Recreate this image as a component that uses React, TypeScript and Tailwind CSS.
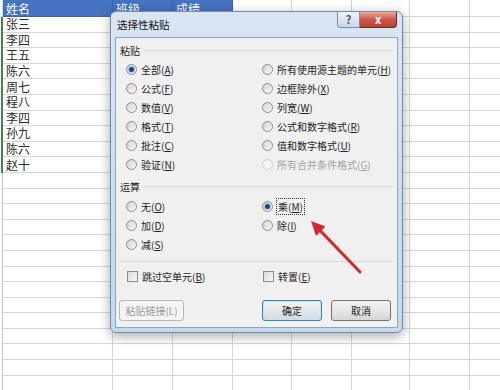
import React from "react";

const colW = [3, 110, 60, 60, 59, 60, 58, 60, 60];
const names = ["张三", "李四", "王五", "陈六", "周七", "程八", "李四", "孙九", "陈六", "赵十"];

function Radio({ checked, disabled }: { checked?: boolean; disabled?: boolean }) {
  return (
    <span
      className={
        disabled
          ? "w-[11px] h-[11px] rounded-full border border-[#cfcfcf] bg-[#f5f5f5] flex items-center justify-center shrink-0"
          : "w-[11px] h-[11px] rounded-full border border-[#8d8d8d] bg-gradient-to-br from-[#d2d2d2] to-[#fafafa] flex items-center justify-center shrink-0"
      }
    >
      {checked && <span className="w-[5px] h-[5px] rounded-full bg-[#1d4a78] shadow-[0_0_0_1px_#a9c8e6]" />}
    </span>
  );
}

function Check() {
  return (
    <span className="w-[11px] h-[11px] border border-[#8d8d8d] bg-gradient-to-br from-[#d8d8d8] to-[#f8f8f8] shrink-0" />
  );
}

type Opt = { t: string; k: string; checked?: boolean; disabled?: boolean; focus?: boolean } | null;

function Option({ o }: { o: Opt }) {
  if (!o) return <div />;
  return (
    <div className="flex items-center gap-[4px] whitespace-nowrap">
      <Radio checked={o.checked} disabled={o.disabled} />
      <span
        className={
          (o.disabled ? "text-[#a3a3a3] " : "text-[#1e1e1e] ") +
          (o.focus ? "outline outline-1 outline-dotted outline-[#333] px-[1px]" : "")
        }
      >
        {o.t}(<u>{o.k}</u>)
      </span>
    </div>
  );
}

function GroupHead({ label }: { label: string }) {
  return (
    <div className="h-[14px] flex items-center gap-[4px]">
      <span className="text-[#1e1e1e]">{label}</span>
      <div className="flex-1 border-t border-[#d9d9d9]" />
    </div>
  );
}

const paste: Opt[] = [
  { t: "全部", k: "A", checked: true },
  { t: "所有使用源主题的单元", k: "H" },
  { t: "公式", k: "F" },
  { t: "边框除外", k: "X" },
  { t: "数值", k: "V" },
  { t: "列宽", k: "W" },
  { t: "格式", k: "T" },
  { t: "公式和数字格式", k: "R" },
  { t: "批注", k: "C" },
  { t: "值和数字格式", k: "U" },
  { t: "验证", k: "N" },
  { t: "所有合并条件格式", k: "G", disabled: true },
];

const ops: Opt[] = [
  { t: "无", k: "O" },
  { t: "乘", k: "M", checked: true, focus: true },
  { t: "加", k: "D" },
  { t: "除", k: "I" },
  { t: "减", k: "S" },
  null,
];

function Sheet() {
  const rows = Array.from({ length: 25 });
  return (
    <div className="flex flex-col font-['Noto_Sans_CJK_SC',sans-serif]">
      <div className="flex h-[17px]">
        {colW.map((w, i) => (
          <div
            key={i}
            style={{ width: w }}
            className={
              i >= 1 && i <= 3
                ? "shrink-0 h-full bg-[#4473c2] border-r border-b border-[#3b64aa] text-white text-[12px] leading-none pl-[3px] pt-[2px] flex items-center whitespace-nowrap"
                : "shrink-0 h-full border-r border-b border-[#d6d6d6]"
            }
          >
            {i === 1 ? "姓名" : i === 2 ? "班级" : i === 3 ? "成绩" : ""}
          </div>
        ))}
      </div>
      {rows.map((_, r) => (
        <div key={r} className="flex h-[15.6px]">
          {colW.map((w, i) => (
            <div
              key={i}
              style={{ width: w }}
              className={
                i === 0
                  ? r < 10
                    ? "shrink-0 h-full border-r-2 border-[#4b7d5a]"
                    : "shrink-0 h-full border-r border-[#bfbfbf]"
                  : "shrink-0 h-full border-r border-b border-[#d6d6d6] text-[#2a2a2a] text-[12px] leading-none pl-[3px] flex items-center whitespace-nowrap"
              }
            >
              {i === 1 && r < names.length ? names[r] : ""}
            </div>
          ))}
        </div>
      ))}
    </div>
  );
}

function Dialog() {
  return (
    <div className="absolute left-[110px] top-[11px] w-[293px] h-[322px] rounded-[6px] border border-[#6e8db3] bg-gradient-to-b from-[#d9e5f3] to-[#c4d8ee] shadow-[0_3px_12px_rgba(0,0,0,0.35)] flex flex-col font-['Noto_Sans_CJK_SC',sans-serif] text-[10px]">
      <div className="h-[25px] flex items-start">
        <span className="ml-[6px] self-center text-[#111] text-[10.5px]">选择性粘贴</span>
        <div className="ml-auto mr-[5px] flex">
          <div className="w-[23px] h-[16px] rounded-bl-[4px] border border-t-0 border-[#7a8ea9] bg-gradient-to-b from-[#eef3f9] to-[#c8d6e7] flex items-center justify-center text-[#4a5a70] text-[11px] font-bold leading-none">
            ?
          </div>
          <div className="w-[37px] h-[16px] rounded-br-[4px] border border-t-0 border-l-0 border-[#6b2a22] bg-gradient-to-b from-[#e9a99a] via-[#c9584b] to-[#c0402f] flex items-center justify-center text-white text-[11px] font-bold leading-none">
            x
          </div>
        </div>
      </div>
      <div className="mx-[4px] mb-[4px] flex-1 border border-[#8fa4bf] bg-[#f0f0f0] px-[4px] pt-[5px] flex flex-col">
        <GroupHead label="粘贴" />
        <div className="mt-[3px] pl-[6px] grid grid-cols-[136px_1fr] auto-rows-[19px]">
          {paste.map((o, i) => (
            <Option key={i} o={o} />
          ))}
        </div>
        <div className="mt-[5px]">
          <GroupHead label="运算" />
        </div>
        <div className="mt-[4px] pl-[6px] grid grid-cols-[136px_1fr] auto-rows-[19px]">
          {ops.map((o, i) => (
            <Option key={i} o={o} />
          ))}
        </div>
        <div className="mt-[7px] border-t border-[#d9d9d9]" />
        <div className="mt-[5px] pl-[7px] grid grid-cols-[136px_1fr] h-[19px]">
          <div className="flex items-center gap-[4px] whitespace-nowrap">
            <Check />
            <span className="text-[#1e1e1e]">
              跳过空单元(<u>B</u>)
            </span>
          </div>
          <div className="flex items-center gap-[4px] whitespace-nowrap">
            <Check />
            <span className="text-[#1e1e1e]">
              转置(<u>E</u>)
            </span>
          </div>
        </div>
        <div className="mt-[14px] flex items-center h-[21px]">
          <div className="ml-[-1px] w-[65px] h-[21px] rounded-[3px] border border-[#b5b9bc] bg-[#f4f4f4] flex items-center justify-center text-[#9a9a9a] whitespace-nowrap">
            粘贴链接(L)
          </div>
          <div className="ml-[78px] w-[60px] h-[21px] rounded-[3px] border border-[#3c7fb1] shadow-[inset_0_0_0_1px_#c4e5f6] bg-gradient-to-b from-[#f2f2f2] via-[#e3e7ea] to-[#d3dadf] flex items-center justify-center text-[#1e1e1e]">
            确定
          </div>
          <div className="ml-[9px] w-[60px] h-[21px] rounded-[3px] border border-[#707070] bg-gradient-to-b from-[#f2f2f2] via-[#e6e6e6] to-[#d6d6d6] flex items-center justify-center text-[#1e1e1e]">
            取消
          </div>
        </div>
      </div>
    </div>
  );
}

export default function App() {
  return (
    <div className="relative w-[500px] h-[390px] overflow-hidden bg-white">
      <Sheet />
      <Dialog />
      <svg className="absolute left-0 top-0 pointer-events-none" width="500" height="390" viewBox="0 0 500 390">
        <line x1="360" y1="272" x2="320.7" y2="231.1" stroke="#d32a2e" strokeWidth="3" strokeLinecap="round" />
        <polygon points="311,221 325.5,226.5 316,236" fill="#d32a2e" />
      </svg>
    </div>
  );
}
